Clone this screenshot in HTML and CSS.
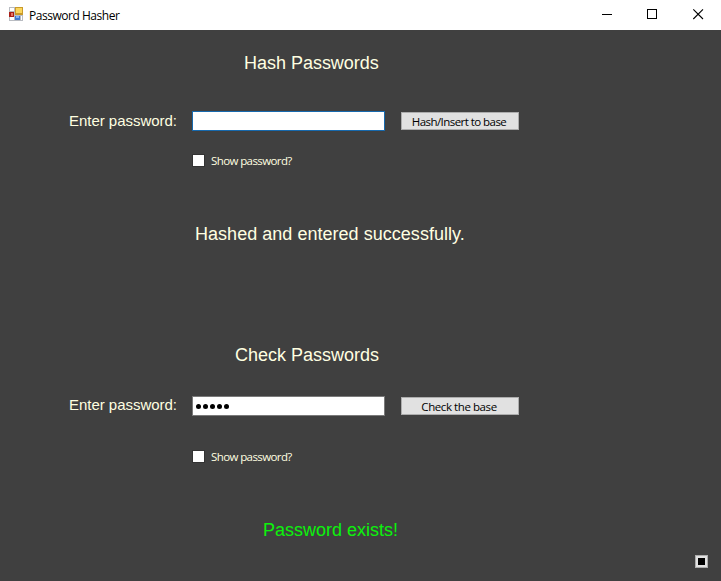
FILE: index.html
```html
<!DOCTYPE html>
<html lang="en">
<head>
<meta charset="utf-8">
<title>Password Hasher</title>
<link rel="stylesheet" href="styles.css">
</head>
<body>
<header class="titlebar">
  <svg class="app-icon" width="14" height="14" viewBox="0 0 14 14" shape-rendering="crispEdges">
    <rect width="14" height="14" fill="#b9bcc2"/>
    <rect x="1" y="1" width="4" height="3" fill="#fff"/>
    <rect x="1" y="10" width="4" height="3" fill="#fff"/>
    <rect x="12" y="9" width="1" height="4" fill="#fff"/>
    <rect x="0" y="5" width="5" height="5" fill="#a91f17"/>
    <rect x="2" y="6" width="2" height="3" fill="#e87565"/>
    <rect x="6" y="0" width="8" height="8" fill="#c99a2b"/>
    <rect x="7" y="1" width="6" height="5" fill="#fbd65c"/>
    <rect x="6" y="9" width="5" height="4" fill="#3f78d0"/>
    <rect x="7" y="9" width="3" height="2" fill="#82b2f4"/>
  </svg>
  <span class="title">Password Hasher</span>
  <nav class="controls">
    <svg width="46" height="30"><path d="M19 14.5h10" stroke="#000"/></svg>
    <svg width="46" height="30"><rect x="18.500" y="9.500" width="9" height="9" fill="none" stroke="#000"/></svg>
    <svg width="46" height="30"><path d="M18.300 9.300l9.700 9.700M28 9.300l-9.700 9.700" stroke="#000" stroke-width="1.100"/></svg>
  </nav>
</header>
<main class="window">
  <section class="panel hash">
    <h2 class="heading">Hash Passwords</h2>
    <div class="row">
      <span class="label">Enter password:</span>
      <div class="field focused"></div>
      <button class="button insert"><span>Hash/Insert to base</span></button>
    </div>
    <div class="check"><i class="box"></i><span>Show password?</span></div>
    <p class="status">Hashed and entered successfully.</p>
  </section>
  <section class="panel verify">
    <h2 class="heading">Check Passwords</h2>
    <div class="row">
      <span class="label">Enter password:</span>
      <div class="field"><i class="dot"></i><i class="dot"></i><i class="dot"></i><i class="dot"></i><i class="dot"></i></div>
      <button class="button lookup"><span>Check the base</span></button>
    </div>
    <div class="check"><i class="box"></i><span>Show password?</span></div>
    <p class="status">Password exists!</p>
  </section>
  <button class="stop"><i></i></button>
</main>
</body>
</html>
```
FILE: styles.css
```css
* { box-sizing: border-box; }
body {
  margin: 0;
  height: 581px;
  display: flex;
  flex-direction: column;
  overflow: hidden;
  font-family: "Liberation Sans", sans-serif;
}
.titlebar {
  height: 30px;
  flex: none;
  display: flex;
  align-items: center;
  background: #fff;
  padding-left: 9px;
}
.app-icon { margin-top: -2px; }
.title {
  margin-left: 6px;
  padding-top: 1px;
  font: 12px/16px "Open Sans", sans-serif;
  letter-spacing: -0.47px;
  white-space: nowrap;
  color: #000;
}
.controls { display: flex; margin-left: auto; }
.controls svg { display: block; }
.window {
  flex: 1;
  position: relative;
  background: #404040;
  color: #ffffe1;
}
.panel {
  display: flex;
  flex-direction: column;
  align-items: flex-start;
}
.hash { height: 292px; padding-top: 23px; }
.verify { padding-top: 23px; }
.heading, .status {
  margin: 0;
  font-size: 18px;
  font-weight: 400;
  line-height: 20px;
  white-space: nowrap;
}
.hash .heading { margin-left: 244px; letter-spacing: -0.02px; }
.verify .heading { margin-left: 235px; letter-spacing: 0; }
.row { display: flex; height: 20px; }
.hash .row { margin-top: 38px; }
.verify .row { margin-top: 31px; }
.label {
  width: 123px;
  margin-left: 69px;
  font-size: 15px;
  line-height: 20px;
  white-space: nowrap;
  letter-spacing: -0.03px;
}
.verify .label { line-height: 18px; }
.field {
  width: 193px;
  height: 20px;
  display: flex;
  align-items: center;
  gap: 2px;
  padding-left: 3px;
  border: 1px solid #7a7a7a;
  background: #fff;
}
.focused { border-color: #1769ad; }
.dot {
  width: 5px;
  height: 5px;
  margin-top: 1px;
  border-radius: 50%;
  background: #000;
}
.button {
  width: 118px;
  height: 18px;
  margin: 1px 0 0 16px;
  padding: 1px 2px 0 0;
  border: 1px solid #adadad;
  background: #e1e1e1;
  color: #000;
  font: 11.5px/16px "Open Sans", sans-serif;
  letter-spacing: -0.55px;
  white-space: nowrap;
}
.lookup { letter-spacing: -0.42px; }
.check {
  display: flex;
  align-items: center;
  height: 14px;
  margin-left: 192px;
  font: 11.5px/14px "Open Sans", sans-serif;
  letter-spacing: -0.6px;
  white-space: nowrap;
}
.hash .check { margin-top: 23px; }
.verify .check { margin-top: 34px; }
.box {
  width: 13px;
  height: 13px;
  margin: -1px 6px 0 0;
  border: 1px solid #333;
  background: #fff;
}
.hash .status { margin: 56px 0 0 195px; letter-spacing: 0.03px; }
.verify .status { margin: 56px 0 0 263px; color: #0cf20c; }
.stop {
  position: absolute;
  right: 13px;
  bottom: 13px;
  width: 13px;
  height: 13px;
  padding: 2px;
  border: 1px solid #adadad;
  background: #e1e1e1;
}
.stop i { display: block; width: 7px; height: 7px; background: #000; }
```
